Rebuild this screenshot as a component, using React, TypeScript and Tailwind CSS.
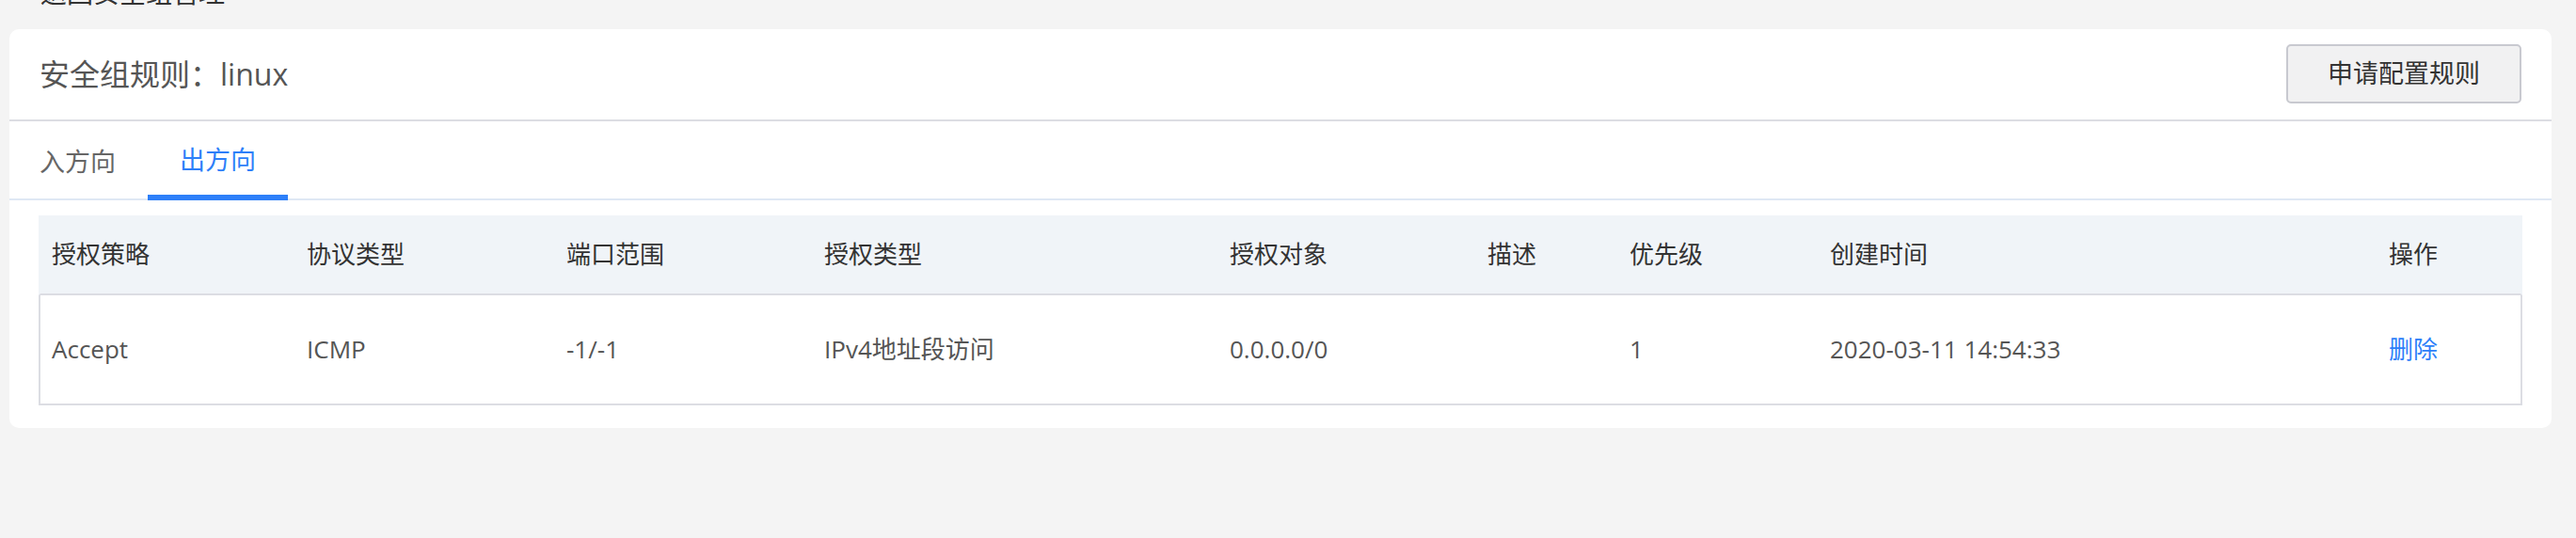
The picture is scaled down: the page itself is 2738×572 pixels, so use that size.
import React from "react";

const COLUMNS = [
  "授权策略",
  "协议类型",
  "端口范围",
  "授权类型",
  "授权对象",
  "描述",
  "优先级",
  "创建时间",
  "操作",
];

const ROWS = [
  {
    policy: "Accept",
    protocol: "ICMP",
    port: "-1/-1",
    authType: "IPv4地址段访问",
    target: "0.0.0.0/0",
    desc: "",
    priority: "1",
    createdAt: "2020-03-11 14:54:33",
  },
];

const gridCols =
  "grid grid-cols-[271px_276px_274px_431px_274px_151px_213px_594px_1fr]";

const App = () => {
  return (
    <div
      className="w-full h-[572px] bg-[#f4f4f4] overflow-hidden"
      style={{ fontFamily: '"Open Sans", "Noto Sans CJK SC", sans-serif' }}
    >
      <div className="h-[31px] overflow-hidden pl-[43px]">
        <p className="text-[28px] leading-[28px] -mt-[22px] text-[#333]">返回安全组管理</p>
      </div>

      <div className="ml-[10px] mr-[26px] bg-white rounded-[10px] pb-[24px]">
        <div className="h-[98px] px-[32px] flex items-center justify-between border-b-2 border-[#dcdde3]">
          <h2 className="text-[32px] text-[#555] font-normal -mt-[1px]">安全组规则：linux</h2>
          <button className="h-[63px] px-[42px] -mt-[2px] bg-[#f1f1f2] border-2 border-[#c8c9d0] rounded-[5px] text-[27px] text-[#333]">
            申请配置规则
          </button>
        </div>

        <div className="h-[84px] pl-[32px] flex items-end border-b-2 border-[#dfe8f4]">
          <div className="h-[82px] pt-[4px] pr-[34px] flex items-center text-[27px] text-[#666]">
            入方向
          </div>
          <div className="h-[84px] -mb-[2px] pt-[4px] px-[34px] flex items-center border-b-[6px] border-[#2d7ff9] text-[27px] text-[#2d7ff9]">
            出方向
          </div>
        </div>

        <div className="mx-[31px] mt-[16px]">
          <div
            className={`${gridCols} h-[85px] bg-[#f0f4f8] border-b-2 border-x-2 border-x-transparent border-b-[#dcdde3] items-center text-[26px] text-[#333]`}
          >
            {COLUMNS.map((col) => (
              <div key={col} className="pl-[12px]">
                {col}
              </div>
            ))}
          </div>
          {ROWS.map((row, index) => (
            <div
              key={index}
              className={`${gridCols} h-[117px] border-x-2 border-b-2 border-[#dcdde3] items-center text-[26px] text-[#555]`}
            >
              <div className="pl-[12px]">{row.policy}</div>
              <div className="pl-[12px]">{row.protocol}</div>
              <div className="pl-[12px]">{row.port}</div>
              <div className="pl-[12px]">{row.authType}</div>
              <div className="pl-[12px]">{row.target}</div>
              <div className="pl-[12px]">{row.desc}</div>
              <div className="pl-[12px]">{row.priority}</div>
              <div className="pl-[12px]">{row.createdAt}</div>
              <div className="pl-[12px]">
                <span className="text-[#2d7ff9] cursor-pointer">删除</span>
              </div>
            </div>
          ))}
        </div>
      </div>
    </div>
  );
};

export default App;
